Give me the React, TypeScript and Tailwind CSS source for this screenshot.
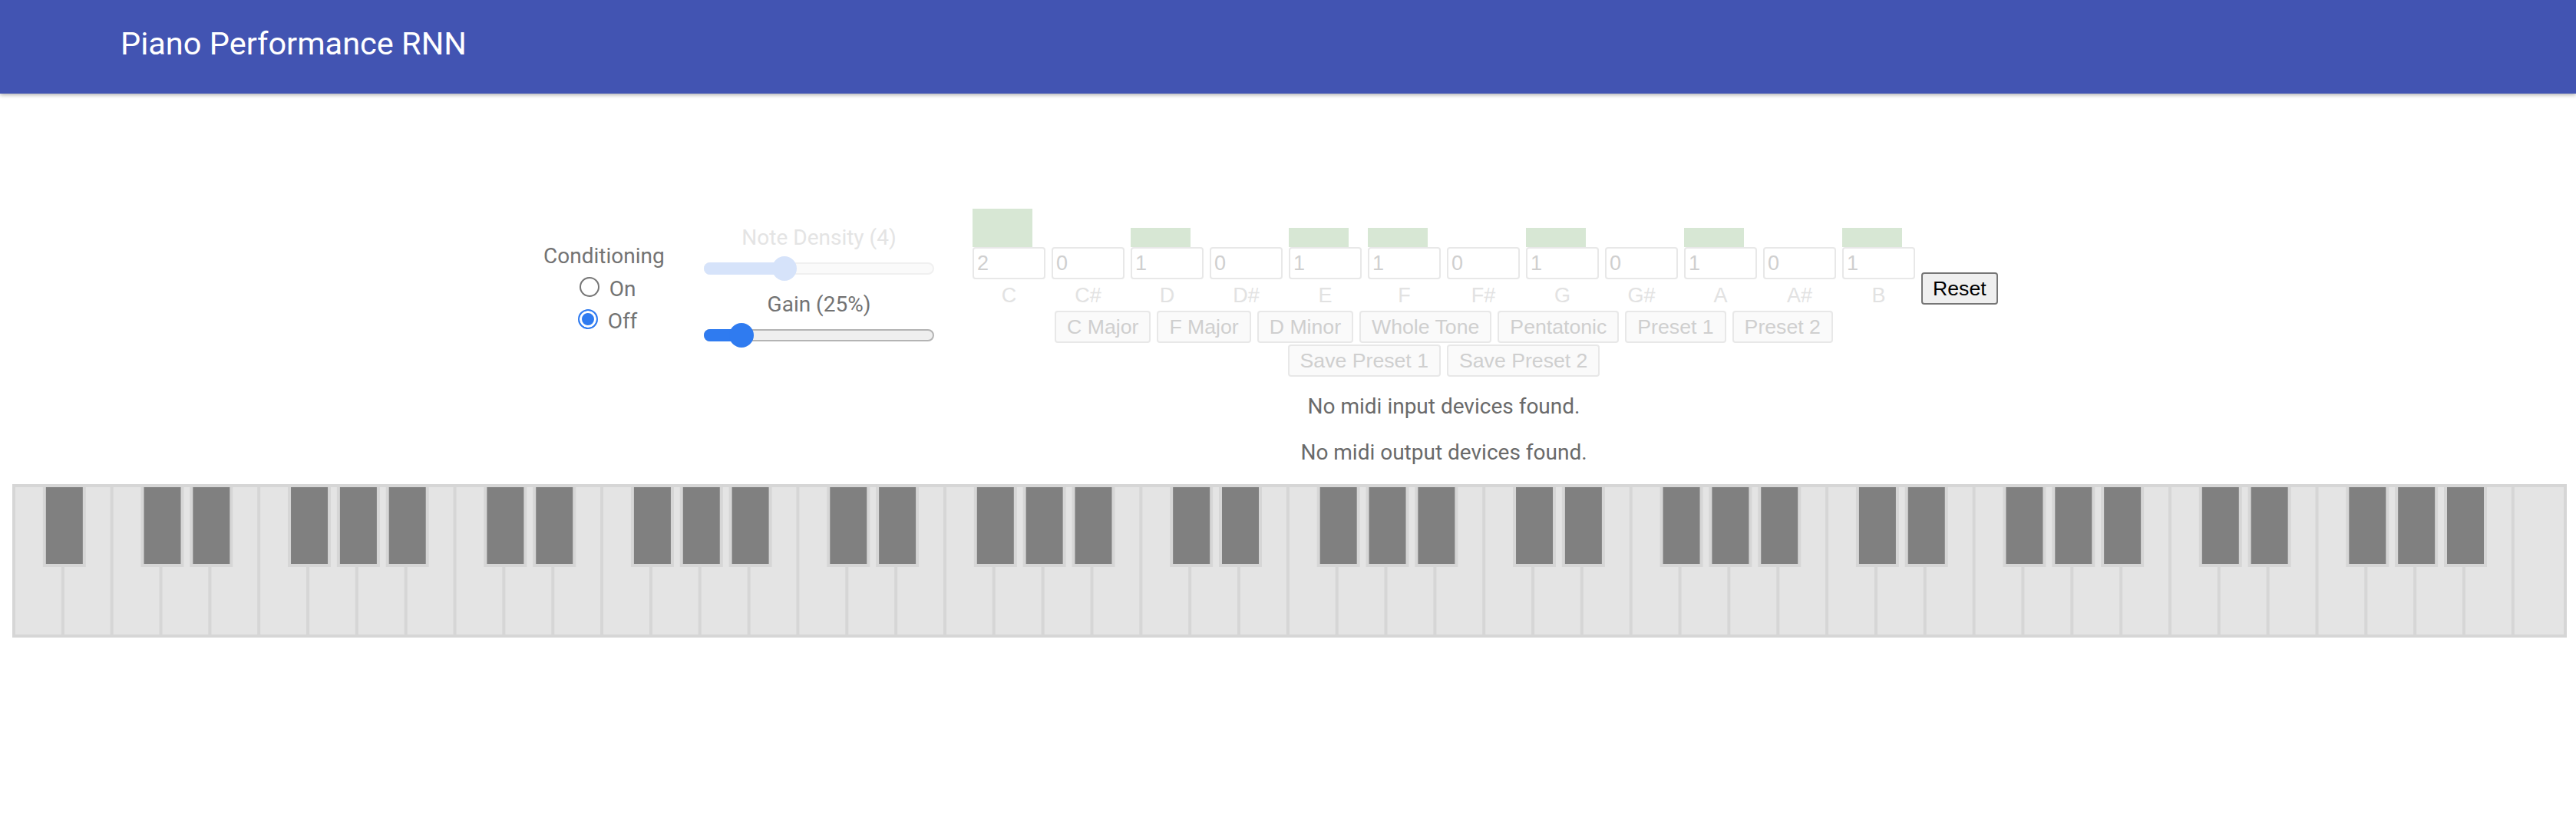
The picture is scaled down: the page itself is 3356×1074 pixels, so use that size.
import React from 'react'

const NOTES = ['C', 'C#', 'D', 'D#', 'E', 'F', 'F#', 'G', 'G#', 'A', 'A#', 'B']
const COUNTS = [2, 0, 1, 0, 1, 1, 0, 1, 0, 1, 0, 1]
const PRESETS = ['C Major', 'F Major', 'D Minor', 'Whole Tone', 'Pentatonic', 'Preset 1', 'Preset 2']

function Slider({ pos, disabled }: { pos: number; disabled?: boolean }) {
  return (
    <div className="relative mt-[8px] flex h-[32px] w-[300px] items-center">
      <div
        className={
          disabled
            ? 'h-[16px] w-full rounded-full border-2 border-[#f0f0f0] bg-[#fafafa]'
            : 'h-[16px] w-full rounded-full border-2 border-[#b4b4b4] bg-[#efefef]'
        }
      />
      <div
        className={
          disabled
            ? 'absolute left-0 h-[16px] rounded-full bg-[#d6e3fa]'
            : 'absolute left-0 h-[16px] rounded-full bg-[#2f7bf0]'
        }
        style={{ width: pos }}
      />
      <div
        className={
          disabled
            ? 'absolute top-0 h-[32px] w-[32px] rounded-full bg-[#d6e3fa]'
            : 'absolute top-0 h-[32px] w-[32px] rounded-full bg-[#2f7bf0]'
        }
        style={{ left: pos - 16 }}
      />
    </div>
  )
}

function Keyboard() {
  const pitch = 63.84
  const total = 52
  const whites = []
  const blacks = []
  for (let i = 0; i < total; i++) {
    const x = 4 + i * pitch
    const w = i === total - 1 ? 3324 - x : pitch - 4
    whites.push(<rect key={i} x={x} y={4} width={w} height={192} fill="#e4e4e4" />)
    const letter = 'ABCDEFG'[i % 7]
    if (i < total - 1 && 'ACDFG'.includes(letter)) {
      const c = (i + 1) * pitch + 4
      blacks.push(
        <g key={i}>
          <rect x={c - 28} y={0} width={56} height={108} fill="#d6d6d6" />
          <rect x={c - 24} y={4} width={48} height={100} fill="#808080" />
        </g>,
      )
    }
  }
  return (
    <svg width={3328} height={200} className="block">
      <rect width={3328} height={200} fill="#d6d6d6" />
      {whites}
      {blacks}
    </svg>
  )
}

export default function App() {
  return (
    <div className="min-h-[1074px] bg-white font-['Roboto','Noto_Sans',sans-serif]">
      <header className="h-[122px] bg-[#4254b2] pl-[157px] pt-[33px] shadow-[0_2px_5px_rgba(0,0,0,0.3)]">
        <h1 className="text-[41.5px] font-normal leading-[48px] text-white">Piano Performance RNN</h1>
      </header>
      <main className="pt-[150px]">
        <div className="flex items-start pl-[708px]">
          <div className="w-[157px] pt-[45px] text-center text-[28px] leading-[33px] text-[#737373]">
            <div>Conditioning</div>
            <label className="mt-[10px] flex items-center justify-center">
              <input
                type="radio"
                name="cond"
                className="mb-[5px] ml-[10px] mr-[13px] h-[26px] w-[26px] appearance-none rounded-full border-2 border-[#767676] bg-white checked:border-[#2f7bf0] checked:bg-[#2f7bf0] checked:shadow-[inset_0_0_0_3px_#fff]"
              />
              On
            </label>
            <label className="mt-[9px] flex items-center justify-center">
              <input
                type="radio"
                name="cond"
                defaultChecked
                className="mb-[5px] ml-[10px] mr-[13px] h-[26px] w-[26px] appearance-none rounded-full border-2 border-[#767676] bg-white checked:border-[#2f7bf0] checked:bg-[#2f7bf0] checked:shadow-[inset_0_0_0_3px_#fff]"
              />
              Off
            </label>
          </div>

          <div className="ml-[52px] w-[300px] pt-[21px] text-center text-[28px] leading-[33px]">
            <div className="text-[#e4e4e4]">Note Density (4)</div>
            <Slider pos={105} disabled />
            <div className="mt-[14px] text-[#737373]">Gain (25%)</div>
            <Slider pos={49} />
          </div>

          <div className="ml-[50px] w-[1228px]">
            <div className="flex gap-[8px] font-['Liberation_Sans',Arial,sans-serif]">
              {NOTES.map((n, i) => (
                <div key={n} className="flex w-[95px] flex-col">
                  <div className="flex h-[50px] items-end">
                    <div className="w-[78px] bg-[#d7e7d4]" style={{ height: COUNTS[i] * 25 }} />
                  </div>
                  <input
                    type="text"
                    disabled
                    readOnly
                    value={COUNTS[i]}
                    className="h-[42px] w-[95px] rounded-[4px] border-2 border-[#e8e8e8] bg-white px-[4px] text-[27px] text-[#cfcfcf]"
                  />
                  <div className="mt-[6px] text-center text-[27px] leading-[30px] text-[#e2e2e2]">{n}</div>
                </div>
              ))}
            </div>
            <div className="mt-[5px] flex justify-center gap-[8px] font-['Liberation_Sans',Arial,sans-serif]">
              {PRESETS.map((p) => (
                <button
                  key={p}
                  disabled
                  className="h-[42px] rounded-[4px] border-2 border-[#e8e8e8] bg-[#fafafa] px-[14px] text-[26.67px] leading-[30px] text-[#cfcfcf]"
                >
                  {p}
                </button>
              ))}
            </div>
            <div className="mt-[2px] flex justify-center gap-[8px] font-['Liberation_Sans',Arial,sans-serif]">
              {['Save Preset 1', 'Save Preset 2'].map((p) => (
                <button
                  key={p}
                  disabled
                  className="h-[42px] rounded-[4px] border-2 border-[#e8e8e8] bg-[#fafafa] px-[14px] text-[26.67px] leading-[30px] text-[#cfcfcf]"
                >
                  {p}
                </button>
              ))}
            </div>
            <p className="mt-[22px] text-center text-[28px] leading-[33px] text-[#6a6a6a]">No midi input devices found.</p>
            <p className="mt-[27px] text-center text-[28px] leading-[33px] text-[#6a6a6a]">No midi output devices found.</p>
          </div>

          <button className="ml-[8px] mt-[83px] h-[42px] rounded-[4px] border-2 border-[#767676] bg-[#efefef] px-[13px] font-['Liberation_Sans',Arial,sans-serif] text-[26.67px] leading-[30px] text-black">
            Reset
          </button>
        </div>
        <div className="mt-[25px] px-[16px]">
          <Keyboard />
        </div>
      </main>
    </div>
  )
}
